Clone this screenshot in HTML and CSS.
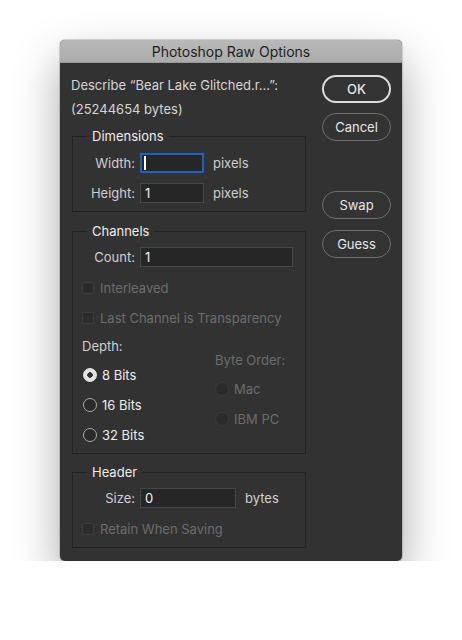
FILE: index.html
```html
<!DOCTYPE html>
<html lang="en">
<head>
    <meta charset="UTF-8">
    <title>Photoshop Raw Options</title>
    <link rel="stylesheet" href="styles.css">
</head>
<body>
    <div class="window">
        <div class="titlebar">Photoshop Raw Options</div>

        <div class="content">
            <!-- left side: the form -->
            <div class="form">
                <p class="line">Describe “Bear Lake Glitched.r...”:</p>
                <p class="line">(25244654 bytes)</p>

                <fieldset class="group dims">
                    <legend>Dimensions</legend>
                    <div class="field">
                        <label>Width:</label>
                        <span class="input focus w-small"><span class="caret"></span></span>
                        <span class="unit">pixels</span>
                    </div>
                    <div class="field">
                        <label>Height:</label>
                        <span class="input w-small">1</span>
                        <span class="unit">pixels</span>
                    </div>
                </fieldset>

                <fieldset class="group channels">
                    <legend>Channels</legend>
                    <div class="field">
                        <label>Count:</label>
                        <span class="input w-wide">1</span>
                    </div>
                    <div class="check disabled"><span class="box"></span>Interleaved</div>
                    <div class="check disabled"><span class="box"></span>Last Channel is Transparency</div>

                    <div class="depth">
                        <div class="col">
                            <div class="heading">Depth:</div>
                            <div class="radio"><span class="dot on"></span>8 Bits</div>
                            <div class="radio"><span class="dot"></span>16 Bits</div>
                            <div class="radio"><span class="dot"></span>32 Bits</div>
                        </div>
                        <div class="col order">
                            <div class="heading disabled">Byte Order:</div>
                            <div class="radio disabled"><span class="dot"></span>Mac</div>
                            <div class="radio disabled"><span class="dot"></span>IBM PC</div>
                        </div>
                    </div>
                </fieldset>

                <fieldset class="group header">
                    <legend>Header</legend>
                    <div class="field">
                        <label>Size:</label>
                        <span class="input w-mid">0</span>
                        <span class="unit">bytes</span>
                    </div>
                    <div class="check disabled"><span class="box"></span>Retain When Saving</div>
                </fieldset>
            </div>

            <!-- right side: buttons -->
            <div class="buttons">
                <button class="btn default">OK</button>
                <button class="btn">Cancel</button>
                <button class="btn spaced">Swap</button>
                <button class="btn">Guess</button>
            </div>
        </div>
    </div>
</body>
</html>
```

FILE: styles.css
```css
* {
    box-sizing: border-box;
}

body {
    margin: 0;
    background: #fff;
    font-family: Inter, "Liberation Sans", Arial, sans-serif;
    font-size: 13px;
    color: #d6d6d6;
}

/* 窗口 */
.window {
    width: 342px;
    margin: 40px 0 0 60px;
    background: #323232;
    border-radius: 5px;
    box-shadow: 0 0 0 1px rgba(0, 0, 0, 0.15), 0 20px 45px rgba(0, 0, 0, 0.35);
    overflow: hidden;
}

.titlebar {
    height: 23px;
    line-height: 23px;
    text-align: center;
    font-size: 14px;
    color: #1e1e1e;
    background: linear-gradient(#b9b9b9, #ababab);
    border-bottom: 1px solid #9a9a9a;
}

.content {
    display: flex;
    padding: 0 11px 13px 11px;
}

.form {
    width: 235px;
}

.line {
    margin: 0;
    line-height: 24px;
}

.line:first-child {
    margin-top: 10px;
}

/* 分组框 */
.group {
    margin: 0 0 0 1px;
    padding: 9px 0 8px 9px;
    border: 1px solid #232323;
    min-width: 0;
}

.group legend {
    margin-left: 5px;
    padding: 0 5px;
    line-height: 16px;
    color: #ececec;
}

.dims {
    margin-top: 7px;
}

.channels {
    margin-top: 11px;
    padding: 8px 0 3px 9px;
}

.header {
    margin-top: 10px;
    padding: 8px 0 3px 9px;
}

.field {
    display: flex;
    align-items: center;
    height: 20px;
}

.field + .field {
    margin-top: 10px;
}

.field label {
    width: 53px;
    text-align: right;
    margin-right: 5px;
    color: #cfcfcf;
}

.input {
    height: 20px;
    line-height: 18px;
    padding-left: 4px;
    background: #262626;
    border: 1px solid #464646;
    color: #f2f2f2;
}

.input.focus {
    border: 2px solid #2160c0;
    padding-left: 2px;
    display: flex;
    align-items: center;
}

.caret {
    width: 2px;
    height: 14px;
    background: #fff;
}

.w-small {
    width: 64px;
}

.w-mid {
    width: 96px;
}

.w-wide {
    width: 153px;
}

.unit {
    margin-left: 9px;
    color: #cfcfcf;
}

/* 复选框 */
.check {
    display: flex;
    align-items: center;
    height: 30px;
}

.field + .check {
    margin-top: 6px;
}

.check .box {
    width: 12px;
    height: 12px;
    margin-right: 6px;
    border: 1px solid #3c3c3c;
    border-radius: 2px;
    background: #2c2c2c;
}

.disabled {
    color: #6c6c6c;
}

/* 深度 / 字节顺序 */
.depth {
    display: flex;
}

.col {
    flex: none;
    width: 133px;
}

.col.order {
    flex: 1;
    padding-top: 14px;
}

.heading {
    line-height: 27px;
    color: #cfcfcf;
}

.heading.disabled {
    color: #6c6c6c;
}

.radio {
    display: flex;
    align-items: center;
    height: 30px;
    color: #ececec;
}

.radio.disabled {
    color: #6c6c6c;
}

.dot {
    width: 14px;
    height: 14px;
    margin: 0 5px 0 1px;
    border: 1px solid #a8a8a8;
    border-radius: 50%;
    background: #2a2a2a;
}

.dot.on {
    background: radial-gradient(circle, #2e2e2e 2.5px, #e4e4e4 3px);
    border-color: #e4e4e4;
}

.radio.disabled .dot {
    margin-left: 0;
    border-color: #3a3a3a;
    background: #2b2b2b;
}

/* 按钮 */
.buttons {
    display: flex;
    flex-direction: column;
    margin-left: 16px;
    padding-top: 12px;
}

.btn {
    width: 69px;
    height: 28px;
    margin-bottom: 10px;
    font: inherit;
    color: #e6e6e6;
    background: #333;
    border: 1px solid #6e6e6e;
    border-radius: 14px;
}

.btn.default {
    border: 2px solid #dcdcdc;
    font-weight: 500;
}

.btn.spaced {
    margin-top: 40px;
    margin-bottom: 11px;
}
```
